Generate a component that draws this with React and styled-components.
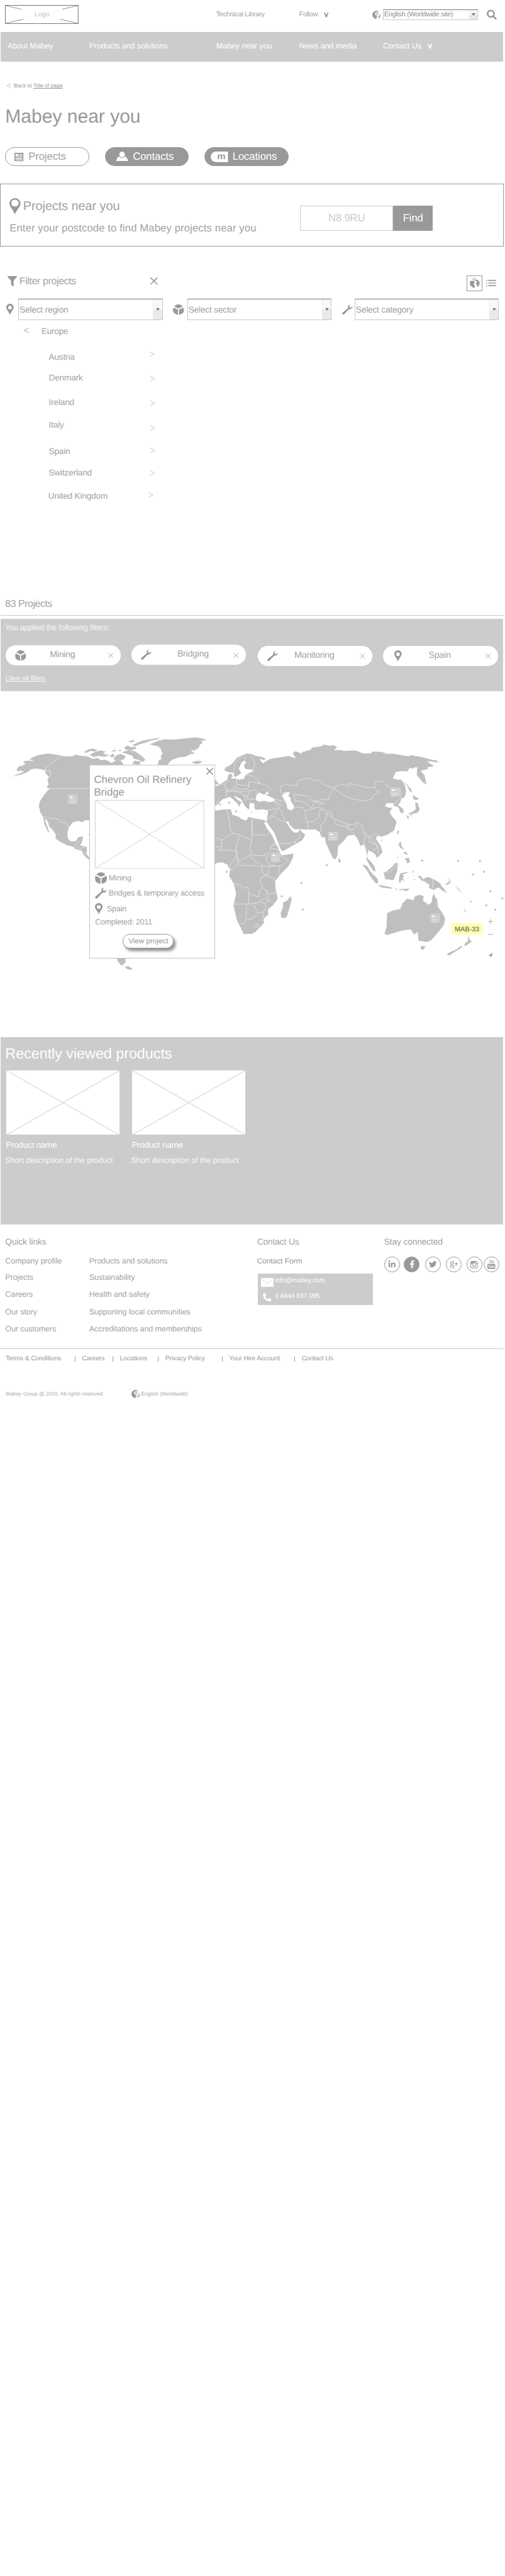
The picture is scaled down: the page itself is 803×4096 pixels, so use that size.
import React from "react";
import styled, { createGlobalStyle, css } from "styled-components";
import { FaLinkedinIn, FaFacebookF, FaTwitter, FaWrench, FaPhone, FaSearch } from "react-icons/fa";

const grey = "#999";
const pale = "#ccc";
const light = "#a2a2a2";

/* sizes are in tenths of a rem */
const type = (size, spacing = 0) => css`
  font-size: ${size / 10}rem;
  letter-spacing: ${spacing / 10}rem;
  white-space: nowrap;
`;

const GlobalStyle = createGlobalStyle`
  html { font-size: 8.343px; }
  body {
    margin: 0;
    background: #fff;
    color: ${light};
    font-family: "Liberation Sans", Arial, Helvetica, sans-serif;
    text-rendering: geometricPrecision;
    overflow: hidden;
  }
  *, *::before, *::after { box-sizing: border-box; }
  svg { display: block; flex: none; }
`;

const Page = styled.div`
  width: 803px;
  height: 4096px;
  overflow: hidden;
  position: relative;
`;

/* ---------- icons ---------- */

const Icon = styled.svg`
  width: ${(p) => p.$w / 10}rem;
  height: ${(p) => p.$h / 10}rem;
  margin: ${(p) => p.$m || "0"};
  overflow: visible;
`;

const Pin = ({ w = 14, h = 21, m, thin }) => (
  <Icon $w={w} $h={h} $m={m} viewBox="0 0 42 64" preserveAspectRatio="none">
    <path
      fill={grey}
      fillRule="evenodd"
      d={
        thin
          ? "M21 0C9 0 0 9 0 21C0 34 12 42 21 64C30 42 42 34 42 21C42 9 33 0 21 0ZM21 6C29 6 35 12 35 20C35 28 29 33 21 33C13 33 7 28 7 20C7 12 13 6 21 6Z"
          : "M21 0C9 0 0 9 0 21C0 34 12 42 21 64C30 42 42 34 42 21C42 9 33 0 21 0ZM21 12A10.500 10.500 0 1 1 21 33A10.500 10.500 0 1 1 21 12Z"
      }
    />
  </Icon>
);

const Sector = ({ w = 21, h = 20, m }) => (
  <Icon $w={w} $h={h} $m={m} viewBox="0 0 64 60" preserveAspectRatio="none" fill={grey}>
    <path d="M8 12Q18 0 32 0Q46 0 56 12L32 24Z" />
    <path d="M4 18L29 31V60Q12 58 4 47Q-3 32 4 18Z" />
    <path d="M60 18L35 31V60Q52 58 60 47Q67 32 60 18Z" />
  </Icon>
);

const WrenchBox = styled.span`
  display: block;
  flex: none;
  font-size: ${(p) => p.$s / 10}rem;
  margin: ${(p) => p.$m || "0"};
  color: ${grey};
`;
const Wrench = ({ s = 20, m }) => (
  <Icon $w={s} $h={s * 0.97} $m={m} viewBox="0 0 60 58" fill={grey}>
    <path d="M47 0L37 4L33 13L35 20L3 47Q-2 54 3 57Q8 60 12 56L40 27Q52 29 58 20L60 11L50 19L43 16L41 9Z" />
  </Icon>
);

const Cross = ({ s = 14, t = 2, m, c = grey }) => (
  <Icon $w={s} $h={s} $m={m} viewBox={`0 0 ${s} ${s}`}>
    <path d={`M0.500 0.500L${s - 0.5} ${s - 0.5}M${s - 0.5} 0.500L0.500 ${s - 0.5}`} stroke={c} strokeWidth={t} fill="none" />
  </Icon>
);

const Chevron = ({ dir = "right", t = 1, c = "#bbb", m, w = 9, h = 10 }) => (
  <Icon $w={w} $h={h} $m={m} viewBox="0 0 9 10" preserveAspectRatio="none">
    <path d={dir === "right" ? "M0 0.500L8.500 5L0 9.500" : "M9 0.500L0.500 5L9 9.500"} stroke={c} strokeWidth={t} fill="none" />
  </Icon>
);

const Vee = ({ c = grey, m }) => (
  <Icon $w={9} $h={9} $m={m} viewBox="0 0 27 27">
    <path d="M0 0H7L14 15L21 0H27L17 27H11Z" fill={c} />
  </Icon>
);

const Globe = ({ m, s = 16 }) => (
  <Icon $w={s} $h={s} $m={m} viewBox="0 0 48 48">
    <circle cx="24" cy="24" r="23" fill="#f0f0f0" />
    <path fill={grey} d="M12 4L24 0L36 4L28 8L22 7L15 14L14 22L24 30L30 28L24 38L22 48L12 44L3 34L0 22L4 11Z" />
    <path fill={grey} d="M47 20L48 28L43 39L34 46L37 36L42 29Z" />
    <path fill="#c4c4c4" d="M24 12L30 9L33 20L26 25L20 22Z" />
  </Icon>
);

const BigGlobe = () => (
  <Icon $w={19} $h={19.300} viewBox="0 0 57 58" fill={grey}>
    <path d="M12 6Q22 0 36 1L34 4L22 5L12 9Z" />
    <path d="M2 18L14 15L26 18L29 28L22 34L28 44L30 57Q14 56 6 46Q-3 34 2 18Z" />
    <path d="M31 10L43 9L52 17L57 27L53 43L40 54L44 43L37 36L34 28L43 26L41 20L33 17Z" />
    <path d="M20 10L28 8L30 13L24 14Z" />
  </Icon>
);

const News = ({ m }) => (
  <Icon $w={17} $h={16} $m={m} viewBox="0 0 51 48">
    <rect width="51" height="48" rx="2" fill={grey} />
    <path fill="#fff" d="M6 7H24V18H6ZM28 7H45V11H28ZM28 14H45V18H28ZM6 22H45V25H6ZM6 30H45V34H6ZM6 38H45V42H6Z" />
  </Icon>
);

/* ---------- top bar ---------- */

const TopBar = styled.header`
  display: grid;
  grid-template-columns: 40.2rem 15.8rem 14rem 20.1rem 1fr;
  align-items: center;
  height: 6.1rem;
  padding: 0 0 0.5rem 1rem;
`;
const Logo = styled.div`
  width: 14rem;
  height: 3.6rem;
  display: grid;
  place-items: center;
  color: #c4c4c4;
  ${type(13, -0.1)}
  > * { grid-area: 1 / 1; }
`;
const LogoFrame = styled.svg`
  width: 100%;
  height: 100%;
`;
const TopLink = styled.span`
  display: flex;
  align-items: center;
  ${type(13, -0.3)}
  line-height: 1.6rem;
`;
const Locale = styled.div`
  display: flex;
  align-items: center;
  gap: 0.4rem;
`;
const SelectBox = styled.div`
  display: flex;
  justify-content: space-between;
  align-items: center;
  width: ${(p) => p.$w / 10}rem;
  height: ${(p) => p.$h / 10}rem;
  padding-left: 0.1rem;
  background: #fff;
  border: 1px solid #c8c8c8;
  border-top: 1.500px solid #777;
  color: ${(p) => p.$color || light};
  ${(p) => type(p.$size, p.$ls)}
`;
const SelectArrow = styled.i`
  display: flex;
  align-items: center;
  justify-content: center;
  width: ${(p) => p.$w / 10}rem;
  height: 100%;
  background: linear-gradient(#f8f8f8 0 50%, #e9e9e9 50%);
  border-left: 1px solid #ececec;
  &::after {
    content: "";
    border: 0.42rem solid transparent;
    border-top: 0.5rem solid #777;
    border-bottom: 0;
  }
`;
const Select = ({ children, w = 275, h = 40, size = 16.5, ls = -0.25, aw = 17, color }) => (
  <SelectBox $w={w} $h={h} $size={size} $ls={ls} $color={color}>
    {children}
    <SelectArrow $w={aw} />
  </SelectBox>
);

const Nav = styled.nav`
  display: grid;
  grid-template-columns: 15.6rem 24.2rem 15.8rem 16rem 1fr;
  align-items: center;
  width: 95.8rem;
  height: 5.6rem;
  margin-left: 0.1rem;
  padding: 0 0 0.2rem 1.3rem;
  background: ${pale};
  color: #fff;
  ${type(15, -0.1)}
  line-height: 2rem;
`;
const NavItem = styled.span`
  display: flex;
  align-items: center;
`;

/* ---------- page head ---------- */

const BackLink = styled.div`
  display: flex;
  align-items: center;
  gap: 0.6rem;
  margin: 4.04rem 0 0 1.3rem;
  color: ${grey};
  ${type(10.4, -0.05)}
  line-height: 1.2rem;
  a { text-decoration: underline; }
`;
const Title = styled.h1`
  margin: 3.3rem 0 0 1rem;
  font-weight: 400;
  color: ${grey};
  ${type(36)}
  line-height: 4rem;
`;
const Tabs = styled.div`
  display: flex;
  gap: 3rem;
  margin: 3.75rem 0 0 1rem;
`;
const Tab = styled.div`
  display: flex;
  align-items: center;
  width: 16rem;
  height: 3.7rem;
  padding: 0 0 0.1rem ${(p) => p.$pad / 10}rem;
  border: 1px solid ${grey};
  border-radius: 1.9rem;
  background: ${(p) => (p.$filled ? grey : "#fff")};
  color: ${(p) => (p.$filled ? "#fff" : light)};
  ${type(20, -0.1)}
`;

/* ---------- postcode panel ---------- */

const Panel = styled.section`
  display: flex;
  width: 96rem;
  height: 12rem;
  margin-top: 3.3rem;
  border: 1px solid ${grey};
`;
const PanelText = styled.div`
  width: 57.1rem;
  padding: 2.6rem 0 0 1.7rem;
`;
const PanelTitle = styled.h2`
  display: flex;
  align-items: center;
  height: 3.1rem;
  margin: 0;
  font-weight: 400;
  ${type(24, -0.15)}
  span { padding: 0.2rem 0 0 0.5rem; }
`;
const PanelNote = styled.p`
  margin: 1.5rem 0 0;
  ${type(20, 0.14)}
  line-height: 2.4rem;
`;
const Postcode = styled.div`
  display: grid;
  place-items: center;
  width: 17.7rem;
  height: 4.8rem;
  margin-top: 4.1rem;
  border: 0.2rem solid ${pale};
  color: ${pale};
  ${type(20, -0.2)}
`;
const Find = styled(Postcode)`
  width: 7.6rem;
  border-color: ${grey};
  background: ${grey};
  color: #fff;
`;

/* ---------- filters ---------- */

const FilterHead = styled.div`
  display: flex;
  align-items: flex-start;
  height: 3rem;
  margin-top: 5.5rem;
  padding-left: 1.4rem;
`;
const FilterTitle = styled.span`
  width: 25rem;
  margin: 0.04rem 0 0 0.5rem;
  ${type(19, -0.4)}
  line-height: 2.4rem;
`;
const MapToggle = styled.div`
  display: grid;
  place-items: center;
  width: 3rem;
  height: 3rem;
  margin: 0 0.7rem 0 58.9rem;
  border: 0.2rem solid ${grey};
`;
const Selects = styled.div`
  display: grid;
  grid-template-columns: 2.3rem 29.5rem 2.7rem 29.5rem 2.4rem 27.5rem;
  align-items: center;
  height: 4rem;
  margin-top: 1.5rem;
  padding-left: 1.2rem;
`;
const RegionHead = styled.div`
  display: flex;
  align-items: center;
  height: 4.24rem;
  padding-left: 4.5rem;
  ${type(16.3, -0.25)}
`;
const Country = styled.div`
  display: flex;
  align-items: center;
  width: 30rem;
  height: 2.4rem;
  margin-top: ${(p) => p.$gap / 10}rem;
  padding-left: ${(p) => p.$x / 10}rem;
  ${type(16.3, -0.2)}
`;
const CountryName = styled.span`
  width: ${(p) => p.$w / 10}rem;
`;

const countries = [
  ["Austria", 16.1, 93, 285, -5],
  ["Denmark", 16, 93, 286, 2],
  ["Ireland", 22, 93, 287, 2],
  ["Italy", 20, 93, 286, 5],
  ["Spain", 26, 93, 286, -2],
  ["Switzerland", 17, 93, 286, 0],
  ["United Kingdom", 20, 92, 283, -2],
];

/* ---------- results ---------- */

const ResultsHead = styled.div`
  width: 95.9rem;
  height: 3.360rem;
  margin: 18.27rem 0 0.55rem 0.1rem;
  padding-left: 0.9rem;
  border-bottom: 1px solid ${pale};
  ${type(19, -0.5)}
  line-height: 2.4rem;
`;
const Applied = styled.section`
  width: 95.8rem;
  height: 13.8rem;
  margin-left: 0.1rem;
  padding: 0.81rem 0 0 0.9rem;
  background: ${pale};
  color: #f6f6f6;
  ${type(15, -0.32)}
  line-height: 2rem;
`;
const Chips = styled.div`
  display: flex;
  height: 4rem;
  margin: 2.19rem 0 1.75rem 0.1rem;
`;
const Chip = styled.div`
  display: flex;
  align-items: center;
  width: 21.9rem;
  height: 3.8rem;
  margin: ${(p) => p.$top / 10}rem ${(p) => p.$gap / 10}rem 0 0;
  padding-left: ${(p) => p.$pad / 10}rem;
  border-radius: 1.9rem;
  background: #fff;
  color: ${light};
  ${type(17, -0.3)}
`;
const ChipLabel = styled.span`
  width: ${(p) => p.$w / 10}rem;
  padding: 0 0 0.2rem ${(p) => p.$pad / 10}rem;
`;
const Clear = styled.a`
  display: block;
  text-decoration: underline;
  ${type(13, -0.32)}
  line-height: 1.6rem;
`;

/* ---------- map ---------- */

const MapArea = styled.section`
  position: relative;
  height: 65.9rem;
  padding-top: 6.3rem;
`;
const World = styled.svg`
  width: 96.2rem;
  height: 49rem;
`;
const Card = styled.article`
  position: absolute;
  left: 17rem;
  top: 14rem;
  width: 24rem;
  height: 37rem;
  padding: 0.4rem 0.2rem 0 1rem;
  background: #fff;
  border: 1px solid #c4c4c4;
`;
const CardTitle = styled.h3`
  margin: -0.15rem 0 0 -0.2rem;
  font-weight: 400;
  color: ${grey};
  ${type(20)}
  line-height: 2.4rem;
`;
const CardPhoto = styled.svg`
  width: 20.8rem;
  height: 13.1rem;
  margin-top: 0.2rem;
`;
const CardRow = styled.div`
  display: flex;
  align-items: center;
  height: 2.2rem;
  margin-top: ${(p) => p.$gap / 10}rem;
  ${(p) => type(15, p.$ls ?? -0.2)}
`;
const CardLabel = styled.span`
  margin-left: ${(p) => p.$ml / 10}rem;
`;
const ViewButton = styled.div`
  display: grid;
  place-items: center;
  width: 9.7rem;
  height: 2.7rem;
  margin: 1.15rem 0 0 5.3rem;
  border: 0.18rem solid ${grey};
  border-radius: 1.35rem;
  background: #fff;
  box-shadow: 0.4rem 0.5rem 0.5rem rgba(110, 110, 110, 0.75);
  color: ${grey};
  ${type(14)}
`;
const Tag = styled.div`
  position: absolute;
  left: 86.1rem;
  top: 44.300rem;
  display: grid;
  place-items: center;
  width: 5.8rem;
  height: 2.1rem;
  border-radius: 0.4rem;
  background: #ffffaa;
  color: #555;
  ${type(13)}
  padding-top: 0.2rem;
`;

const NewsPin = ({ x, y }) => (
  <g transform={`translate(${x} ${y})`}>
    <rect x="1" y="1" width="48" height="45" fill="#c4c4c4" stroke="#f1f1f1" strokeWidth="2.500" />
    <path fill="#fff" d="M8 8H24V18H8Z" />
    <path d="M27 10H42M27 16H42M7 24H43M7 30H43M7 35H43M7 40H43" stroke="#eee" strokeWidth="2.500" />
  </g>
);

const dots = [
  [-147, 846], [-93, 500], [-133, 450], [-185, 460], [281, 910], [168, 986], [288, 1061], [425, 808], [971, 782], [1176, 784], [1301, 784],
  [1323, 846], [1261, 861], [1361, 957], [1429, 999], [1389, 1063], [1337, 1037],
];

const WorldMap = () => (
  <World viewBox="0 0 2886 1470" preserveAspectRatio="none">
    <g fill="#bfbfbf" strokeLinejoin="round">
      {/* North and Central America */}
      <path d="M65 302L108 286L138 272L125 268L95 270L98 256L108 243L130 238L148 226L132 220L140 212L165 210L190 211L184 205L166 203L185 192L215 180L275 169L345 180L365 186L415 185L435 176L455 182L500 186L530 200L560 195L575 208L600 205L625 215L640 225L655 212L690 208L710 240L520 560L508 552L490 550L470 562L445 555L415 565L395 590L385 625L388 655L405 673L435 670L447 648L475 643L470 672L458 695L480 700L497 702L495 745L512 765V778L490 762L472 740L470 728L430 716L415 700L390 697L345 675L318 655L318 630L298 602L280 585L275 560L260 542L258 555L270 585L283 622L272 612L255 575L246 530L230 505L222 468L230 440L250 410L275 378L288 375L265 360L278 350L272 318L280 302L262 285L258 265L230 258L200 255L175 262L158 275L120 290Z" />
      <path d="M480 162L500 148L527 140L558 150L545 158L515 155L495 166Z" />
      <path d="M512 176L545 160L575 152L605 158L590 168L605 175L630 180L600 188L560 183L535 190Z" />
      <path d="M632 160L660 146L662 156ZM670 152L695 148L690 156ZM630 180L650 170L655 188L635 192ZM650 200L665 180L690 172L720 186L705 205L680 208L665 214Z" />
      <path d="M660 235L668 220L700 232ZM755 228L770 210L805 216L795 235ZM695 163L735 150L775 158L805 180L832 205L815 218L790 205L765 200L755 182L725 172Z" />
      <path d="M712 134L730 124L750 133L775 130L780 142L745 152L715 146ZM735 100L765 92L770 102L745 106ZM755 122L790 105L815 96L845 90L918 78L895 90L862 95L825 110L795 118L775 127Z" />
      <path d="M855 118L905 96L940 88L1000 90L1070 82L1120 77L1155 84L1185 92L1150 98L1160 108L1145 118L1135 138L1110 152L1090 150L1115 172L1092 172L1060 188L1020 192L980 208L955 235H902L908 208L925 198L918 185L930 170L918 140L900 127Z" />
      <path d="M1100 218L1120 212L1145 211L1157 217L1135 228L1112 228L1098 222ZM497 634L512 628V634Z" />
      {/* tip of South America */}
      <path d="M667 1340H722L716 1352L720 1362L700 1378L715 1384L690 1378L675 1360ZM715 1388L735 1384L762 1404L735 1405L718 1396Z" />
      <path d="M1225 310L1240 330L1252 345L1225 350Z" />
    </g>

    <g transform="translate(1443 0)" fill="#bfbfbf" strokeLinejoin="round">
      {/* Europe, Asia */}
      <path d="M-158 252L-130 238L-110 222L-90 195L-60 180L-30 170L-5 173L20 183L50 188L75 198L70 208L40 200L60 226L80 212L105 200L145 193L205 183L235 192L250 198L232 172L240 157L262 160L285 182L294 200L280 212L272 210L280 192L270 172L290 160L332 148L340 136L395 128L410 118L440 126L465 122L485 133L465 150L500 150L530 155L590 152L635 170L680 168L685 158L740 160L770 172L800 170L895 186L905 179L960 188L1035 208L1050 207L1065 222L1020 215L998 215L1038 241L1000 250L1005 258L962 268L985 295L995 345L975 335L940 292L943 248L930 248L920 255L900 252L885 272L850 270L820 275L803 312L835 320L850 318L870 345L880 385L870 420L852 425L845 450L832 462L865 490L862 512L845 505L842 490L832 475L808 468L805 452L780 455L775 449L757 468L775 478L800 480L785 505L800 530L825 560L810 610L770 635L740 645L715 640L705 655L735 700L744 735L712 767L705 750L690 735L662 722L655 765L680 790L698 815L706 845L690 838L672 812L652 775L655 745L640 690L618 698L600 655L580 635L545 640L530 660L490 700L487 750L477 773L462 770L440 725L420 680L415 648L395 648L385 620L360 603L310 605L270 602L240 602L215 580L205 556L195 565L222 605L240 622L262 620L270 605L303 635L285 665L245 688L175 728L165 722L140 680L95 600L82 560L90 495L60 488L17 492L10 470L15 458L-13 450L-18 470L-15 490L-35 480L-52 455L-63 432L-103 410L-95 425L-58 452L-68 455L-75 475L-90 450L-128 417L-173 432L-203 465L-240 470V350L-200 355L-173 338L-143 318L-138 292L-120 290L-120 312L-50 316L-38 290L10 268L-35 265L-100 306L-110 280L-130 278L-158 268Z" />
      {/* Africa */}
      <path d="M-240 500L-148 487L-123 489L-115 520L-80 530L-60 545L-43 552L-30 548L-25 532L20 542L72 550L90 590L120 650L150 715L165 752L235 742L230 770L205 815L165 855L130 900L133 945L145 1000L120 1035L88 1062L92 1090L68 1110L65 1140L20 1188L0 1200L-50 1202L-62 1175L-88 1125L-108 1040L-93 970L-106 915L-133 870L-128 835L-143 805L-173 791L-200 795L-215 802H-240Z" />
      {/* seas */}
      <g fill="#fff">
        <path d="M-78 256L-60 218L-45 210L-35 222L-48 235L-42 258L2 262L-5 272L-35 276L-48 305L-75 320L-95 306L-62 285Z" />
        <path d="M20 435L22 412L38 392L58 402L70 405L85 386L95 398L78 405L125 428L128 442L100 448L65 440L38 445Z" />
        <path d="M168 410L185 395L205 388L215 395L205 410L220 425L218 440L236 465L238 480L222 495L200 485L195 455Z" />
        <path d="M65 562L85 566L125 622L150 685L168 738L155 715L130 680L115 640L85 600Z" />
        <path d="M-20 208L0 180L3 186L-10 208Z" opacity="0" />
      </g>
      {/* islands */}
      <path d="M865 330L885 348L905 370L915 395L900 385L885 355ZM918 405L935 418L953 428L935 437L920 430ZM930 450L945 452L957 490L945 508L905 518L888 515L920 500L935 485ZM882 522L895 530L893 544L885 538ZM902 522L912 520L908 530ZM828 612L837 608L835 632L827 628ZM735 665L748 660L740 672Z" />
      <path d="M838 680L850 675L853 700L870 720L850 712L838 698ZM862 735L875 730L888 745L880 750ZM868 772L895 765L902 790L885 798L880 780ZM822 770L838 750L828 768Z" />
      <path d="M492 765L505 780L503 795L493 792ZM628 804L655 812L680 850L715 885L720 912L705 912L680 880L655 838ZM718 925L735 922L795 935L800 943L740 936ZM812 942L830 943L828 948ZM838 946L870 943L900 943L880 958L865 950L840 951Z" />
      <path d="M750 848L765 845L800 815L820 793L832 800L828 840L815 875L808 893L760 888ZM845 855L890 845L885 852L855 862L868 868L860 880L868 900L850 890L848 910L838 905L840 875ZM915 838L922 840L917 860ZM918 888L940 891L925 893Z" />
      <path d="M945 870L962 868L975 888L1000 876L1030 885L1070 908L1085 930L1115 968L1085 952L1065 935L1035 950L1010 938L1012 920L985 902L968 895ZM1100 918L1130 900L1135 905L1118 920ZM1115 886L1130 893L1132 902ZM1145 915L1150 928L1145 920ZM1160 928L1180 942L1200 968L1180 950Z" />
      <path d="M770 1082L800 1068L845 1058L860 1025L885 1000L920 1008L930 985L958 977L980 985L975 1010L1008 1035L1025 1020L1030 985L1038 970L1045 990L1057 1005L1060 1045L1085 1080L1102 1112L1095 1150L1060 1195L1022 1238L995 1248L950 1240L945 1190L925 1205L905 1175L860 1180L770 1207L755 1200L768 1160Z" />
      <path d="M965 1268L992 1275L975 1292L963 1290ZM1235 1208L1240 1232L1255 1242L1230 1262L1210 1272L1218 1252L1232 1242ZM1195 1268L1198 1278L1150 1308L1130 1322L1112 1322L1120 1310L1165 1290ZM1206 1048L1212 1062L1230 1083L1212 1070ZM1243 1008L1250 1025L1255 1015Z" />
      <path d="M218 984L225 1005L200 1095L190 1110L165 1108L162 1080L175 1050L175 1022L200 1010ZM-138 290L-120 285L-112 300L-130 312ZM70 505L80 502L75 510ZM-18 503L10 505L-5 508Z" />
      {dots.map(([x, y]) => (
        <circle key={`${x}-${y}`} cx={x} cy={y} r="6" />
      ))}
    </g>

    {/* borders */}
    <g fill="none" stroke="#f0f0f0" strokeWidth="2.500" strokeLinejoin="round">
      <path d="M347 182L260 255L262 270L285 268L290 290L285 305M275 370H512M248 530L285 541L330 543L350 565L375 562L395 597M428 716L430 690L458 672M440 714L455 695M445 718L495 702M462 718L470 733L495 742" />
      <g transform="translate(1443 0)">
        <path d="M160 370L162 355L192 342L215 352L258 350V325L315 308L360 325L375 320L410 350L468 368L500 345L550 355V342L605 350L640 362L700 365L706 328L740 328L790 368L845 375L848 400L845 428L805 460M468 370L500 395L570 430L640 440L682 430L690 408L733 390L700 375" />
        <path d="M468 370L438 408L440 430L400 432L360 440L345 465L350 480M160 370L165 395L190 395M235 405L265 405L315 415L340 440L380 445L410 455L380 460L360 445M238 408L245 440L290 445L320 465L345 485M345 485L375 475L400 485L430 500L455 508L458 540L500 555L545 575L570 578L600 565L632 585L632 610L665 650L705 628L735 645" />
        <path d="M225 490L250 475L290 480L305 500L302 540L320 570L318 602M305 495L345 485M310 560L350 560L380 530L385 495L405 485M410 515L430 510L455 540M430 515L412 560L390 580L395 615L380 615M470 555L475 575L540 590L545 575M545 580L550 600L590 638M545 600L580 605L600 570M632 610L650 640L640 660L638 690L655 720M665 650L670 675L710 690L715 712L685 720M665 640L700 680L725 712L715 740" />
        <path d="M90 495L135 485L160 490L190 555L205 560M90 545L120 530L165 555L195 565M100 530L135 510V490M155 490L145 460L120 440M120 428L170 440L190 450M130 440L165 465M160 685L215 682L245 672L270 650L272 632M245 672V688M0 548V635H80L95 622M-3 545V655L-15 720L0 750L70 755L75 738L85 750" />
        <path d="M-213 650L-175 665L-110 625L-78 632L-5 665M-148 487L-140 515L-130 560L-125 610L-110 625M-175 665V700L-215 705M-175 702L-195 725L-165 720L-95 725L-78 640M-85 725L-90 755L-130 810V835M-95 725L-80 785L-10 750M-85 765L-82 805L-130 835L-110 838M-80 810L0 810L60 820M-10 752L10 780L60 812L90 815L125 808M105 710L85 765L75 770L105 815L170 812L207 778L160 755M105 710L120 685L150 700M108 710L150 720L165 745" />
        <path d="M60 820L55 850L75 865L90 860L95 820M155 815L150 860M75 865L125 885L130 900M75 865L50 880L45 905L60 935L95 975L140 965M-110 915L-75 918L-50 940L-25 930L-20 970L0 975L35 990L40 950L60 940M80 950L90 990L100 1015L85 1018L75 990M-20 970L-22 1030H-110M-22 1030L30 1025L70 995M-32 1035L-38 1120L-45 1140L-70 1145M-35 1118L0 1115L30 1080L62 1075M5 1032L30 1075M40 1018L75 1025L75 1060L60 1080L65 1125L50 1120M20 1150L32 1145L38 1155L28 1165L18 1160Z" />
        <path d="M-90 310L-88 345L-50 352L-20 350L-22 330L20 335L40 340L90 355L105 370L95 390M-38 290L0 298L35 320L38 345M-88 345L-105 362L-60 375L-20 365L-20 350M-135 325L-160 345L-145 380L-100 375L-80 390L-40 385L0 380L20 375L25 410M-155 390L-120 385L-70 390L-45 410L-40 445M-20 385L-30 430L20 430M-50 405L-25 420M-110 305L-100 225L-60 182M-8 180L15 225L5 262M-42 205L-45 180M-165 345L-190 340M-150 380L-145 415M-190 430L-205 455" />
        <path d="M1031 887V948M752 850L785 845L830 805" />
      </g>
    </g>

    <NewsPin x={391} y={408} />
    <NewsPin x={1549} y={739} />
    <NewsPin x={1879} y={619} />
    <NewsPin x={2233} y={366} />
    <NewsPin x={2461} y={1087} />

    <g stroke={grey} strokeWidth="3" fill="none">
      <path d="M2791 1130H2819M2805 1116V1144M2791 1204H2819" />
      <path d="M2819 1310L2791 1323L2802 1325L2806 1338Z" fill={grey} stroke="none" />
    </g>
  </World>
);

/* ---------- recently viewed ---------- */

const Recent = styled.section`
  width: 95.8rem;
  height: 35.8rem;
  margin-left: 0.1rem;
  padding: 1.5rem 0 0 0.9rem;
  background: ${pale};
  color: #fff;
`;
const RecentTitle = styled.h2`
  margin: 0 0 1.500rem;
  font-weight: 400;
  ${type(28, -0.05)}
  line-height: 3.4rem;
`;
const Products = styled.div`
  display: flex;
  gap: 2.4rem;
  padding-left: 0.2rem;
`;
const Product = styled.article`
  width: 21.6rem;
`;
const Photo = styled.svg`
  width: 21.6rem;
  height: 12.3rem;
  background: #fff;
`;
const ProductName = styled.div`
  margin: 1.05rem 0 0.83rem -0.1rem;
  ${type(16, -0.15)}
  line-height: 2rem;
`;
const ProductNote = styled.div`
  margin-left: -0.2rem;
  color: #f8f8f8;
  ${type(15, -0.1)}
  line-height: 2rem;
`;

/* ---------- footer ---------- */

const Footer = styled.footer`
  display: grid;
  grid-template-columns: 48rem 24.2rem 1fr;
  height: 23.6rem;
  padding: 2.33rem 0 0 1rem;
`;
const FooterTitle = styled.h4`
  margin: 0 0 1.65rem;
  font-weight: 400;
  ${type(16.5, -0.15)}
  line-height: 2rem;
`;
const LinkGrid = styled.div`
  display: grid;
  grid-template-columns: 16rem 1fr;
  grid-template-rows: 3.1rem 3.23rem 3.37rem 3.2rem 2rem;
  ${type(15, -0.1)}
  line-height: 2rem;
`;
const ContactForm = styled.div`
  color: ${grey};
  ${type(14.4, -0.1)}
  line-height: 2rem;
`;
const ContactBox = styled.div`
  width: 22rem;
  height: 6rem;
  margin: 1.3rem 0 0 0.1rem;
  padding: 0.2rem 0 0 0.6rem;
  background: ${pale};
  color: #fff;
  ${type(12.6, -0.15)}
`;
const ContactLine = styled.div`
  display: grid;
  grid-template-columns: 2.700rem 1fr;
  align-items: center;
  height: 3rem;
  span { padding-bottom: 0.6rem; }
`;
const PhoneIcon = styled(FaPhone)`
  width: 1.6rem;
  height: 1.6rem;
  margin: 0 0 0.3rem 0.4rem;
  transform: scaleX(-1);
`;
const Social = styled.div`
  display: flex;
  color: ${grey};
`;
const Bubble = styled.span`
  display: grid;
  place-items: center;
  width: 3rem;
  height: 3rem;
  margin: 0.1rem ${(p) => p.$gap / 10}rem 0 0;
  border: 1px solid ${grey};
  border-radius: 50%;
  font-size: 1.5rem;
  background: ${(p) => (p.$filled ? grey : "#fff")};
  color: ${(p) => (p.$filled ? "#fff" : grey)};
`;
const Legal = styled.div`
  display: flex;
  width: 96rem;
  border-top: 1px solid ${pale};
  padding: 1.1rem 0 0 1.1rem;
  color: ${grey};
  ${type(12.5, -0.15)}
  line-height: 1.6rem;
`;
const LegalItem = styled.span`
  display: flex;
  justify-content: space-between;
  align-items: center;
  width: ${(p) => p.$w / 10}rem;
  margin-right: 1.25rem;
  &:not(:last-child)::after {
    content: "";
    width: 1px;
    height: 1rem;
    background: ${grey};
  }
`;
const Copyright = styled.div`
  display: flex;
  align-items: center;
  margin: 5.08rem 0 0 1.1rem;
  color: #aaa;
  ${type(10, 0.03)}
  line-height: 1.6rem;
`;
const CopyText = styled.span`
  width: 23.9rem;
`;

const Search = styled(FaSearch)`
  width: 1.9rem;
  height: 2rem;
  margin-left: 1.7rem;
  color: ${grey};
`;

const legal = [
  ["Terms & Conditions", 132.5],
  ["Careers", 60],
  ["Locations", 74],
  ["Privacy Policy", 109],
  ["Your Hire Account", 126],
  ["Contact Us", 70],
];
const links = [
  "Company profile", "Products and solutions",
  "Projects", "Sustainability",
  "Careers", "Health and safety",
  "Our story", "Supporting local communities",
  "Our customers", "Accreditations and memberships",
];

export default function App() {
  return (
    <Page>
      <GlobalStyle />
      <TopBar>
        <Logo>
          <LogoFrame viewBox="0 0 140 36" preserveAspectRatio="none" fill="none" stroke="#777">
            <rect x="0.600" y="0.600" width="138.800" height="34.800" strokeWidth="1.200" />
            <path d="M1 1L31 8M139 1L109 8M1 35L35 27M139 35L105 27" />
          </LogoFrame>
          <span>Logo</span>
        </Logo>
        <TopLink>Technical Library</TopLink>
        <TopLink>Follow<Vee m="0.2rem 0 0 1.2rem" /></TopLink>
        <Locale>
          <Globe />
          <Select w={181} h={20} size={13} ls={-0.33} aw={16} color="#8e8e8e">English (Worldwide site)</Select>
        </Locale>
        <Search />
      </TopBar>
      <Nav>
        <NavItem>About Mabey</NavItem>
        <NavItem>Products and solutions</NavItem>
        <NavItem>Mabey near you</NavItem>
        <NavItem>News and media</NavItem>
        <NavItem>Contact Us<Vee c="#fff" m="0 0 0 1.2rem" /></NavItem>
      </Nav>

      <BackLink>
        <Chevron dir="left" c={grey} w={7.5} h={8} />
        <span>Back to <a>Title of page</a></span>
      </BackLink>
      <Title>Mabey near you</Title>
      <Tabs>
        <Tab $pad={16}><News m="0.2rem 1rem 0 0" />Projects</Tab>
        <Tab $filled $pad={20}>
          <Icon $w={22} $h={18} $m="0.1rem 1rem 0 0" viewBox="0 0 66 54" fill="#fff">
            <ellipse cx="33" cy="17" rx="16" ry="17" />
            <path d="M0 54Q2 32 16 29Q32 46 50 29Q64 32 66 54Z" />
          </Icon>
          Contacts
        </Tab>
        <Tab $filled $pad={10}>
          <Icon $w={33} $h={20} $m="0.1rem 0.9rem 0 0" viewBox="0 0 99 60">
            <path d="M30 0H99V60H30A30 30 0 0 1 30 0Z" fill="#fff" />
            <text x="37" y="43" fontSize="50" fontWeight="700" fill={grey} textLength="48" lengthAdjust="spacingAndGlyphs">m</text>
          </Icon>
          Locations
        </Tab>
      </Tabs>

      <Panel>
        <PanelText>
          <PanelTitle><Pin w={21} h={31} thin /><span>Projects near you</span></PanelTitle>
          <PanelNote>Enter your postcode to find Mabey projects near you</PanelNote>
        </PanelText>
        <Postcode>N8 9RU</Postcode>
        <Find>Find</Find>
      </Panel>

      <FilterHead>
        <Icon $w={18} $h={20} $m="0.1rem 0 0 0" viewBox="0 0 54 60" fill={grey}>
          <path d="M0 0H54V4L35 26V60L20 50V26L0 4Z" />
        </Icon>
        <FilterTitle>Filter projects</FilterTitle>
        <Cross m="0.400rem 0 0 0" />
        <MapToggle><BigGlobe /></MapToggle>
        <Icon $w={19} $h={12} $m="0.9rem 0 0 0" viewBox="0 0 19 12" fill={grey}>
          <path d="M0 0H2V2H0ZM4 0H19V2H4ZM0 5H2V7H0ZM4 5H19V7H4ZM0 10H2V12H0ZM4 10H19V12H4Z" />
        </Icon>
      </FilterHead>
      <Selects>
        <Pin /><Select>Select region</Select>
        <Sector /><Select>Select sector</Select>
        <Wrench /><Select>Select category</Select>
      </Selects>

      <RegionHead><Chevron dir="left" t={2} c={pale} m="0 2.5rem 0.2rem 0" />Europe</RegionHead>
      {countries.map(([name, gap, x, cx, dy]) => (
        <Country key={name} $gap={gap} $x={x}>
          <CountryName $w={cx - x}>{name}</CountryName>
          <Chevron m={`${(dy * 2) / 10}rem 0 0 0`} />
        </Country>
      ))}

      <ResultsHead>83 Projects</ResultsHead>
      <Applied>
        You applied the following filters:
        <Chips>
          <Chip $top={1} $gap={20} $pad={18}><Sector /><ChipLabel $w={156} $pad={45}>Mining</ChipLabel><Cross s={10} t={1} /></Chip>
          <Chip $top={0} $gap={22} $pad={18}><Wrench m="0 0 0.1rem 0" /><ChipLabel $w={157} $pad={50}>Bridging</ChipLabel><Cross s={10} t={1} m="0.3rem 0 0 0" /></Chip>
          <Chip $top={2} $gap={20} $pad={19}><Wrench /><ChipLabel $w={156} $pad={31}>Monitoring</ChipLabel><Cross s={10} t={1} /></Chip>
          <Chip $top={2} $gap={0} $pad={22}><Pin /><ChipLabel $w={159} $pad={51}>Spain</ChipLabel><Cross s={10} t={1} /></Chip>
        </Chips>
        <Clear>Clear all filters</Clear>
      </Applied>

      <MapArea>
        <WorldMap />
        <Card>
          <Cross s={13} m="0.1rem 0 0 21.2rem" />
          <CardTitle>Chevron Oil Refinery<br />Bridge</CardTitle>
          <CardPhoto viewBox="0 0 208 131" fill="none" stroke="#c8c8c8" preserveAspectRatio="none">
            <rect x="0.500" y="0.500" width="207" height="130" />
            <path d="M0 0L208 131M208 0L0 131" />
          </CardPhoto>
          <CardRow $gap={7}><Sector w={23} h={22} /><CardLabel $ml={3}>Mining</CardLabel></CardRow>
          <CardRow $gap={7}><Wrench s={22} /><CardLabel $ml={4}>Bridges &amp; temporary access</CardLabel></CardRow>
          <CardRow $gap={7}><Pin w={14.5} h={21} /><CardLabel $ml={8}>Spain</CardLabel></CardRow>
          <CardRow $gap={4} $ls={-0.28}>Completed: 2011</CardRow>
          <ViewButton>View project</ViewButton>
        </Card>
        <Tag>MAB-33</Tag>
      </MapArea>

      <Recent>
        <RecentTitle>Recently viewed products</RecentTitle>
        <Products>
          {[0, 1].map((n) => (
            <Product key={n}>
              <Photo viewBox="0 0 216 123" preserveAspectRatio="none">
                <path d="M0 0L216 123M216 0L0 123" stroke="#d0d0d0" strokeWidth="1.200" />
              </Photo>
              <ProductName>Product name</ProductName>
              <ProductNote>Short description of the product</ProductNote>
            </Product>
          ))}
        </Products>
      </Recent>

      <Footer>
        <div>
          <FooterTitle>Quick links</FooterTitle>
          <LinkGrid>{links.map((l) => <span key={l}>{l}</span>)}</LinkGrid>
        </div>
        <div>
          <FooterTitle>Contact Us</FooterTitle>
          <ContactForm>Contact Form</ContactForm>
          <ContactBox>
            <ContactLine>
              <Icon $w={24} $h={17} viewBox="0 0 72 51">
                <rect width="72" height="51" rx="5" fill="#fff" />
                <path d="M3 2L36 35L69 2" fill="none" stroke={pale} strokeWidth="3" />
              </Icon>
              <span>info@mabey.com</span>
            </ContactLine>
            <ContactLine><PhoneIcon /><span>0 8444 937 095</span></ContactLine>
          </ContactBox>
        </div>
        <div>
          <FooterTitle>Stay connected</FooterTitle>
          <Social>
            <Bubble $gap={8}><FaLinkedinIn /></Bubble>
            <Bubble $gap={10} $filled><FaFacebookF /></Bubble>
            <Bubble $gap={10}><FaTwitter /></Bubble>
            <Bubble $gap={9}>
              <Icon $w={16} $h={18} viewBox="0 0 48 54" fill={grey}>
                <text x="0" y="37" fontSize="56" fontFamily="Liberation Serif" fill={grey}>g</text>
                <path d="M36 15H40V22H47V26H40V33H36V26H29V22H36Z" />
              </Icon>
            </Bubble>
            <Bubble $gap={3}>
              <Icon $w={14} $h={14} viewBox="0 0 42 42" fill="none" stroke={grey} strokeWidth="4">
                <rect x="2" y="2" width="38" height="38" rx="6" />
                <path d="M2 14H14M28 14H40" />
                <path d="M4 4H28V13H4Z" fill={grey} stroke="none" />
                <circle cx="21" cy="20" r="10" fill="#fff" />
              </Icon>
            </Bubble>
            <Bubble $gap={0}>
              <Icon $w={15} $h={18} viewBox="0 0 45 54">
                <text x="9" y="19" fontSize="25" fontWeight="700" fill={grey} textLength="28" lengthAdjust="spacingAndGlyphs">You</text>
                <rect y="23" width="45" height="30" rx="6" fill={grey} />
                <text x="4" y="46" fontSize="24" fontWeight="700" fill="#fff" textLength="37" lengthAdjust="spacingAndGlyphs">Tube</text>
              </Icon>
            </Bubble>
          </Social>
        </div>
      </Footer>

      <Legal>
        {legal.map(([name, w]) => (
          <LegalItem key={name} $w={w}>{name}</LegalItem>
        ))}
      </Legal>
      <Copyright>
        <CopyText>Mabey Group @ 2016. All rights reserved.</CopyText>
        <Globe m="0 0.3rem 0 0" />
        English (Worldwide)
      </Copyright>
    </Page>
  );
}
